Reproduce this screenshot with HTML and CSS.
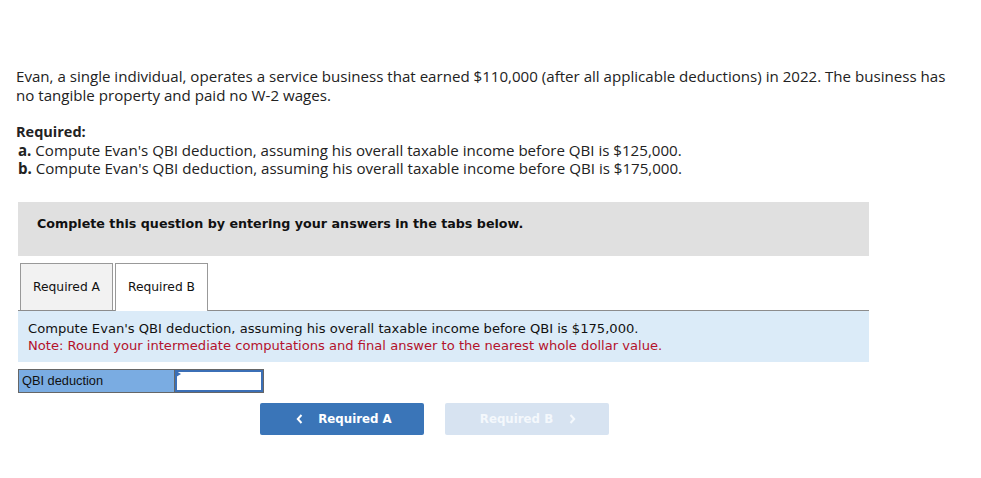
FILE: index.html
```html
<!DOCTYPE html>
<html lang="en">
<head>
    <meta charset="UTF-8">
    <title>QBI deduction</title>
    <link rel="stylesheet" href="styles.css">
</head>
<body>
<div class="page">
    <!--题干-->
    <p class="intro">Evan, a single individual, operates a service business that earned $110,000 (after all applicable deductions) in 2022. The business has no tangible property and paid no W-2 wages.</p>
    <div class="required">
        <h4>Required:</h4>
        <p><b>a.</b> Compute Evan's QBI deduction, assuming his overall taxable income before QBI is $125,000.</p>
        <p><b>b.</b> Compute Evan's QBI deduction, assuming his overall taxable income before QBI is $175,000.</p>
    </div>
    <!--答题区-->
    <div class="panel">
        <div class="banner">Complete this question by entering your answers in the tabs below.</div>
        <ul class="tabs">
            <li>Required A</li>
            <li class="active">Required B</li>
        </ul>
        <div class="info">
            <p>Compute Evan's QBI deduction, assuming his overall taxable income before QBI is $175,000.</p>
            <p class="note">Note: Round your intermediate computations and final answer to the nearest whole dollar value.</p>
        </div>
        <div class="answer">
            <span class="label">QBI deduction</span>
            <span class="input"></span>
        </div>
        <div class="nav">
            <a href="#" class="btn prev">
                <svg class="arrow" width="7" height="10" viewBox="0 0 7 10"><path d="M5.5 1 L1.8 5 L5.5 9" fill="none" stroke="currentColor" stroke-width="2"/></svg>
                <span>Required A</span>
            </a>
            <a href="#" class="btn next disabled">
                <span>Required B</span>
                <svg class="arrow" width="7" height="10" viewBox="0 0 7 10"><path d="M1.5 1 L5.2 5 L1.5 9" fill="none" stroke="currentColor" stroke-width="2"/></svg>
            </a>
        </div>
    </div>
</div>
</body>
</html>
```

FILE: styles.css
```css
* {
    margin: 0;
    padding: 0;
}

body {
    background: #fff;
    color: #222;
    font-family: "Open Sans", "Lato", sans-serif;
}

ul {
    list-style: none;
}

.page {
    padding: 67px 16px 0 16px;
}

.intro {
    font-size: 15.1px;
    line-height: 19px;
    width: 940px;
}

.required {
    margin-top: 18px;
    font-size: 15.1px;
    line-height: 18px;
}

.required h4 {
    font-size: 14.5px;
    font-weight: bold;
}

.required p {
    padding-left: 2px;
}

.panel {
    width: 851px;
    margin: 25px 0 0 2px;
    font-family: "DejaVu Sans", Verdana, sans-serif;
}

.banner {
    background: #e0e0e0;
    height: 54px;
    padding-left: 19px;
    line-height: 44px;
    font-size: 12.7px;
    font-weight: bold;
    color: #111;
}

.tabs {
    display: flex;
    gap: 2px;
    margin-top: 7px;
    padding-left: 2px;
    border-bottom: 1px solid #8c8c8c;
}

.tabs li {
    width: 91px;
    height: 46px;
    line-height: 46px;
    text-align: center;
    font-size: 12.3px;
    color: #111;
    background: #f2f2f2;
    border: 1px solid #999;
    border-bottom: none;
}

.tabs li.active {
    background: #fff;
    height: 47px;
    margin-bottom: -1px;
}

.info {
    background: #dbebf8;
    padding: 9px 10px 8px;
    font-size: 13.1px;
    line-height: 17px;
    color: #111;
}

.info .note {
    color: #b4122c;
}

.answer {
    display: flex;
    margin-top: 7px;
    height: 24px;
}

.answer .label {
    width: 152px;
    background: #7aace2;
    border: 1px solid #666;
    border-right: none;
    font-family: "Liberation Sans", Arial, sans-serif;
    font-size: 12.8px;
    line-height: 22px;
    padding-left: 3px;
    color: #111;
}

.answer .input {
    position: relative;
    width: 88px;
    background: #fff;
    border: 1px solid #666;
    box-shadow: inset 0 0 0 2px #3b6fb6;
}

.answer .input::before {
    content: "";
    position: absolute;
    left: 1px;
    top: 1px;
    border-left: 5px solid #3b6fb6;
    border-top: 3px solid transparent;
    border-bottom: 3px solid transparent;
}

.nav {
    display: flex;
    gap: 21px;
    margin: 10px 0 0 242px;
}

.btn {
    display: flex;
    align-items: center;
    justify-content: center;
    gap: 15px;
    width: 164px;
    height: 32px;
    box-sizing: border-box;
    border-radius: 2px;
    text-decoration: none;
    font-size: 11.8px;
    font-weight: bold;
    color: #fff;
    background: #3a75b8;
}

.prev {
    padding-left: 4px;
}

.next {
    padding-left: 2px;
    gap: 16px;
}

.btn.disabled {
    background: #d7e3f1;
    color: #f4f8fc;
}
```
